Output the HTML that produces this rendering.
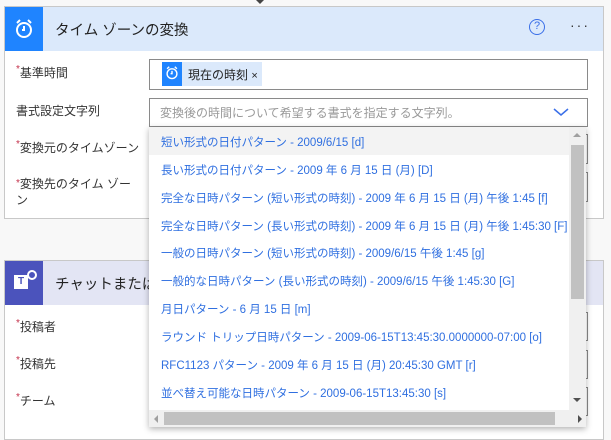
<!DOCTYPE html><html><head><meta charset="utf-8"><style>
*{box-sizing:border-box;margin:0;padding:0}
body{width:611px;height:430px;background:#f8f8f8;font-family:"Liberation Sans","Noto Sans CJK JP",sans-serif;position:relative;overflow:hidden;font-size:12px;color:#333}
.abs{position:absolute}
.card{position:absolute;left:4px;width:600px;background:#fff;border:1px solid #c8c8c8}
.lbl{position:absolute;left:16px;font-size:12px;color:#333}
.lbl b{color:#c4314b;font-weight:normal;font-size:10px;vertical-align:top}
.inp{position:absolute;left:149px;width:439px;border:1px solid #8a8a8a;background:#fff}
.item{position:absolute;left:12px;font-size:11.5px;color:#2f6fe0;white-space:nowrap}
</style></head><body>
<div class="abs" style="left:256px;top:0;width:0;height:0;border-left:4px solid transparent;border-right:4px solid transparent;border-top:4px solid #444"></div>
<div class="card" style="top:6px;height:213px">
 <div class="abs" style="left:0;top:0;width:598px;height:44px;background:#dbe9fb"></div>
 <div class="abs" style="left:0;top:0;width:38px;height:44px;background:#1f84ff"></div>
 <svg class="abs" style="left:9px;top:11px" width="20" height="22" viewBox="0 0 20 22"><circle cx="10" cy="12" r="7" fill="none" stroke="#fff" stroke-width="2"/><path d="M10 8v4h-2M3 5l3-3M17 5l-3-3" stroke="#fff" stroke-width="2" fill="none"/></svg>
 <div class="abs" style="left:50px;top:12px;font-size:14.5px;color:#222">タイム ゾーンの変換</div>
 <div class="abs" style="left:524px;top:12px;width:16px;height:16px;border:1.5px solid #3a6fe8;border-radius:50%;color:#3a6fe8;font-size:11px;text-align:center;line-height:13px">?</div>
 <div class="abs" style="left:565px;top:10px;font-size:14px;color:#333;letter-spacing:2px">···</div>
</div>
<div class="lbl" style="top:64px"><b>*</b>基準時間</div>
<div class="inp" style="top:59px;height:31px"></div>
<div class="abs" style="left:162px;top:62px;width:20px;height:24px;background:#1f84ff"></div>
<svg class="abs" style="left:165px;top:65px" width="14" height="16" viewBox="0 0 20 22"><circle cx="10" cy="12" r="7" fill="none" stroke="#fff" stroke-width="2"/><path d="M10 8v4h-2M3 5l3-3M17 5l-3-3" stroke="#fff" stroke-width="2" fill="none"/></svg>
<div class="abs" style="left:182px;top:62px;width:80px;height:24px;background:#dbe9fb;font-size:12px;padding:4px 0 0 6px;color:#222;white-space:nowrap">現在の時刻 <span style="font-size:11px">×</span></div>
<div class="lbl" style="top:102px">書式設定文字列</div>
<div class="inp" style="top:98px;height:29px"></div>
<div class="abs" style="left:160px;top:104px;font-size:12px;color:#999">変換後の時間について希望する書式を指定する文字列。</div>
<svg class="abs" style="left:553px;top:106px" width="16" height="12"><path d="M1 3l7 6 7-6" stroke="#3a6fe8" stroke-width="1.5" fill="none"/></svg>
<div class="lbl" style="top:139px"><b>*</b>変換元のタイムゾーン</div>
<div class="lbl" style="top:176px;line-height:16px"><b>*</b>変換先のタイム ゾー<br>ン</div>
<div class="abs" style="left:500px;top:134px;width:88px;height:30px;border:1px solid #8a8a8a"></div>
<div class="abs" style="left:500px;top:172px;width:88px;height:30px;border:1px solid #8a8a8a"></div>

<div class="card" style="top:260px;height:180px">
 <div class="abs" style="left:0;top:0;width:598px;height:44px;background:#e3e5f4"></div>
 <div class="abs" style="left:0;top:0;width:38px;height:44px;background:#4b53bc"></div>
 <div class="abs" style="left:9px;top:14px;width:14px;height:14px;background:#fff;color:#4b53bc;font-size:10px;font-weight:bold;text-align:center;line-height:14px">T</div>
 <div class="abs" style="left:22px;top:9px;width:10px;height:10px;border-radius:50%;border:2px solid #fff"></div>
 <div class="abs" style="left:50px;top:12px;font-size:14.5px;color:#222;white-space:nowrap">チャットまたはチャネルでメッセージを投稿する</div>
</div>
<div class="lbl" style="top:318px"><b>*</b>投稿者</div>
<div class="lbl" style="top:355px"><b>*</b>投稿先</div>
<div class="lbl" style="top:392px"><b>*</b>チーム</div>
<div class="abs" style="left:500px;top:312px;width:88px;height:29px;border:1px solid #8a8a8a"></div>
<div class="abs" style="left:500px;top:350px;width:88px;height:29px;border:1px solid #8a8a8a"></div>
<div class="abs" style="left:500px;top:387px;width:88px;height:29px;border:1px solid #8a8a8a"></div>

<div class="abs" style="left:149px;top:127px;width:437px;height:300px;background:#fff;box-shadow:0 2px 6px rgba(0,0,0,.3);overflow:hidden">
 <div class="abs" style="left:0;top:0;width:420px;height:28px;background:#f3f3f3"></div>
 <div class="item" style="top:7px">短い形式の日付パターン - 2009/6/15 [d]</div>
 <div class="item" style="top:35px">長い形式の日付パターン - 2009 年 6 月 15 日 (月) [D]</div>
 <div class="item" style="top:63px">完全な日時パターン (短い形式の時刻) - 2009 年 6 月 15 日 (月) 午後 1:45 [f]</div>
 <div class="item" style="top:91px">完全な日時パターン (長い形式の時刻) - 2009 年 6 月 15 日 (月) 午後 1:45:30 [F]</div>
 <div class="item" style="top:118px">一般の日時パターン (短い形式の時刻) - 2009/6/15 午後 1:45 [g]</div>
 <div class="item" style="top:146px">一般的な日時パターン (長い形式の時刻) - 2009/6/15 午後 1:45:30 [G]</div>
 <div class="item" style="top:174px">月日パターン - 6 月 15 日 [m]</div>
 <div class="item" style="top:202px">ラウンド トリップ日時パターン - 2009-06-15T13:45:30.0000000-07:00 [o]</div>
 <div class="item" style="top:230px">RFC1123 パターン - 2009 年 6 月 15 日 (月) 20:45:30 GMT [r]</div>
 <div class="item" style="top:258px">並べ替え可能な日時パターン - 2009-06-15T13:45:30 [s]</div>
 <div class="abs" style="left:420px;top:0;width:17px;height:283px;background:#f0f0f0"></div>
 <div class="abs" style="left:422px;top:18px;width:13px;height:154px;background:#c1c1c1"></div>
 <div class="abs" style="left:424px;top:6px;border-left:4px solid transparent;border-right:4px solid transparent;border-bottom:4px solid #a0a0a0"></div>
 <div class="abs" style="left:424px;top:271px;border-left:4px solid transparent;border-right:4px solid transparent;border-top:4px solid #505050"></div>
 <div class="abs" style="left:0;top:283px;width:437px;height:17px;background:#f0f0f0"></div>
 <div class="abs" style="left:15px;top:285px;width:391px;height:13px;background:#c1c1c1"></div>
 <div class="abs" style="left:5px;top:288px;border-top:4px solid transparent;border-bottom:4px solid transparent;border-right:4px solid #a0a0a0"></div>
 <div class="abs" style="left:429px;top:288px;border-top:4px solid transparent;border-bottom:4px solid transparent;border-left:4px solid #505050"></div>
</div>
</body></html>
